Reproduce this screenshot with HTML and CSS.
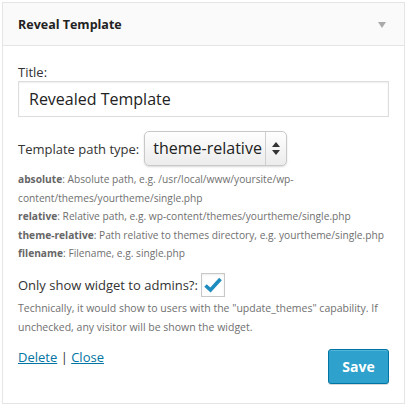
FILE: index.html
```html
<!DOCTYPE html>
<html>
<head>
<meta charset="utf-8">
<link rel="stylesheet" href="styles.css">
</head>
<body>
<div class="widget">
  <div class="widget-top">
    <h3 class="widget-title">Reveal Template</h3>
    <span class="toggle"></span>
  </div>
  <div class="widget-inside">
    <label class="lbl">Title:</label>
    <div class="text-input">Revealed Template</div>

    <div class="row-select">
      <span class="lbl">Template path type:</span>
      <div class="select">
        <span class="select-value">theme-relative</span>
        <span class="select-arrows">
          <svg width="8" height="13" viewBox="0 0 8 13"><path d="M4 0 L8 5 L0 5 Z M0 8 L8 8 L4 13 Z" fill="#333"/></svg>
        </span>
      </div>
    </div>

    <div class="help">
      <div><b>absolute</b>: Absolute path, e.g. /usr/local/www/yoursite/wp-content/themes/yourtheme/single.php</div>
      <div class="nw"><b>relative</b>: Relative path, e.g. wp-content/themes/yourtheme/single.php</div>
      <div class="nw"><b>theme-relative</b>: Path relative to themes directory, e.g. yourtheme/single.php</div>
      <div class="nw"><b>filename</b>: Filename, e.g. single.php</div>
    </div>

    <div class="row-check">
      <span class="lbl">Only show widget to admins?:</span>
      <span class="checkbox">
        <svg width="18" height="16" viewBox="0 0 18 16"><path d="M1.5 8.5 L6.5 13 L16.5 2" fill="none" stroke="#1e8cbe" stroke-width="3.6"/></svg>
      </span>
    </div>
    <div class="help help-check">Technically, it would show to users with the "update_themes" capability. If unchecked, any visitor will be shown the widget.</div>

    <div class="actions">
      <div class="links"><a href="#">Delete</a> | <a href="#">Close</a></div>
      <button class="save">Save</button>
    </div>
  </div>
</div>
</body>
</html>
```
FILE: styles.css
```css
html, body {
  margin: 0;
  padding: 0;
  background: #fff;
}
body {
  padding: 2px 3px 0 2px;
  font-family: "Open Sans", "Liberation Sans", sans-serif;
  color: #333;
}
.widget {
  border: 1px solid #e5e5e5;
  background: #fff;
  height: 402px;
  box-sizing: border-box;
  box-shadow: 0 1px 1px rgba(0,0,0,0.04);
}
.widget-top {
  height: 42px;
  background: #fafafa;
  border-bottom: 1px solid #e5e5e5;
  display: flex;
  align-items: center;
  justify-content: space-between;
  padding: 0 18px 0 15px;
}
.widget-title {
  margin: 0;
  font-size: 12.5px;
  font-weight: 700;
  color: #222;
}
.toggle {
  width: 0;
  height: 0;
  border-left: 4.5px solid transparent;
  border-right: 4.5px solid transparent;
  border-top: 6px solid #aaa;
  margin-top: 2px;
}
.widget-inside {
  padding: 17px 15px 0 15px;
}
.lbl {
  display: block;
  font-size: 13px;
  color: #333;
  line-height: 18px;
  white-space: nowrap;
}
.text-input {
  height: 36px;
  box-sizing: border-box;
  border: 1px solid #ddd;
  box-shadow: inset 0 1px 2px rgba(0,0,0,0.07);
  padding: 0 10px;
  font-size: 16px;
  line-height: 34px;
  color: #222;
}
.row-select {
  margin-top: 14px;
  display: flex;
  align-items: center;
  gap: 5px;
}
.select {
  display: flex;
  align-items: stretch;
  height: 35px;
  width: 143px;
  box-sizing: border-box;
  border: 1px solid #c8c8c8;
  border-radius: 5px;
  background: linear-gradient(#fefefe, #ececec);
  box-shadow: 0 1px 2px rgba(0,0,0,0.15);
}
.select-value {
  flex: 1;
  font-size: 16px;
  line-height: 33px;
  padding-left: 8px;
  color: #222;
  white-space: nowrap;
}
.select-arrows {
  width: 20px;
  border-left: 1px solid #cfcfcf;
  display: flex;
  align-items: center;
  justify-content: center;
}
.help {
  font-size: 10.2px;
  line-height: 18.6px;
  color: #6f6f6f;
  margin-top: 4px;
}
.help .nw {
  white-space: nowrap;
}
.help b {
  font-weight: 700;
  color: #666;
}
.row-check {
  margin-top: 10px;
  display: flex;
  align-items: center;
  gap: 3px;
}
.checkbox {
  width: 24px;
  height: 24px;
  box-sizing: border-box;
  border: 1px solid #c8c8c8;
  box-shadow: inset 0 1px 2px rgba(0,0,0,0.08);
  display: flex;
  align-items: center;
  justify-content: center;
}
.help-check {
  margin-top: 2px;
  font-size: 10.5px;
}
.actions {
  margin-top: 11px;
  display: flex;
  justify-content: space-between;
  align-items: flex-start;
}
.links {
  font-size: 13px;
  color: #333;
  line-height: 20px;
}
.links a {
  color: #0074a2;
  text-decoration: underline;
}
.save {
  width: 61px;
  height: 35px;
  margin-top: 2px;
  background: #2ea2cc;
  border: 1px solid #0074a2;
  border-radius: 3px;
  color: #fff;
  font-family: "Open Sans", "Liberation Sans", sans-serif;
  font-weight: 700;
  font-size: 14px;
  box-shadow: inset 0 1px 0 rgba(120,200,230,0.5), 0 1px 0 rgba(0,0,0,0.15);
  padding: 0;
}
```
